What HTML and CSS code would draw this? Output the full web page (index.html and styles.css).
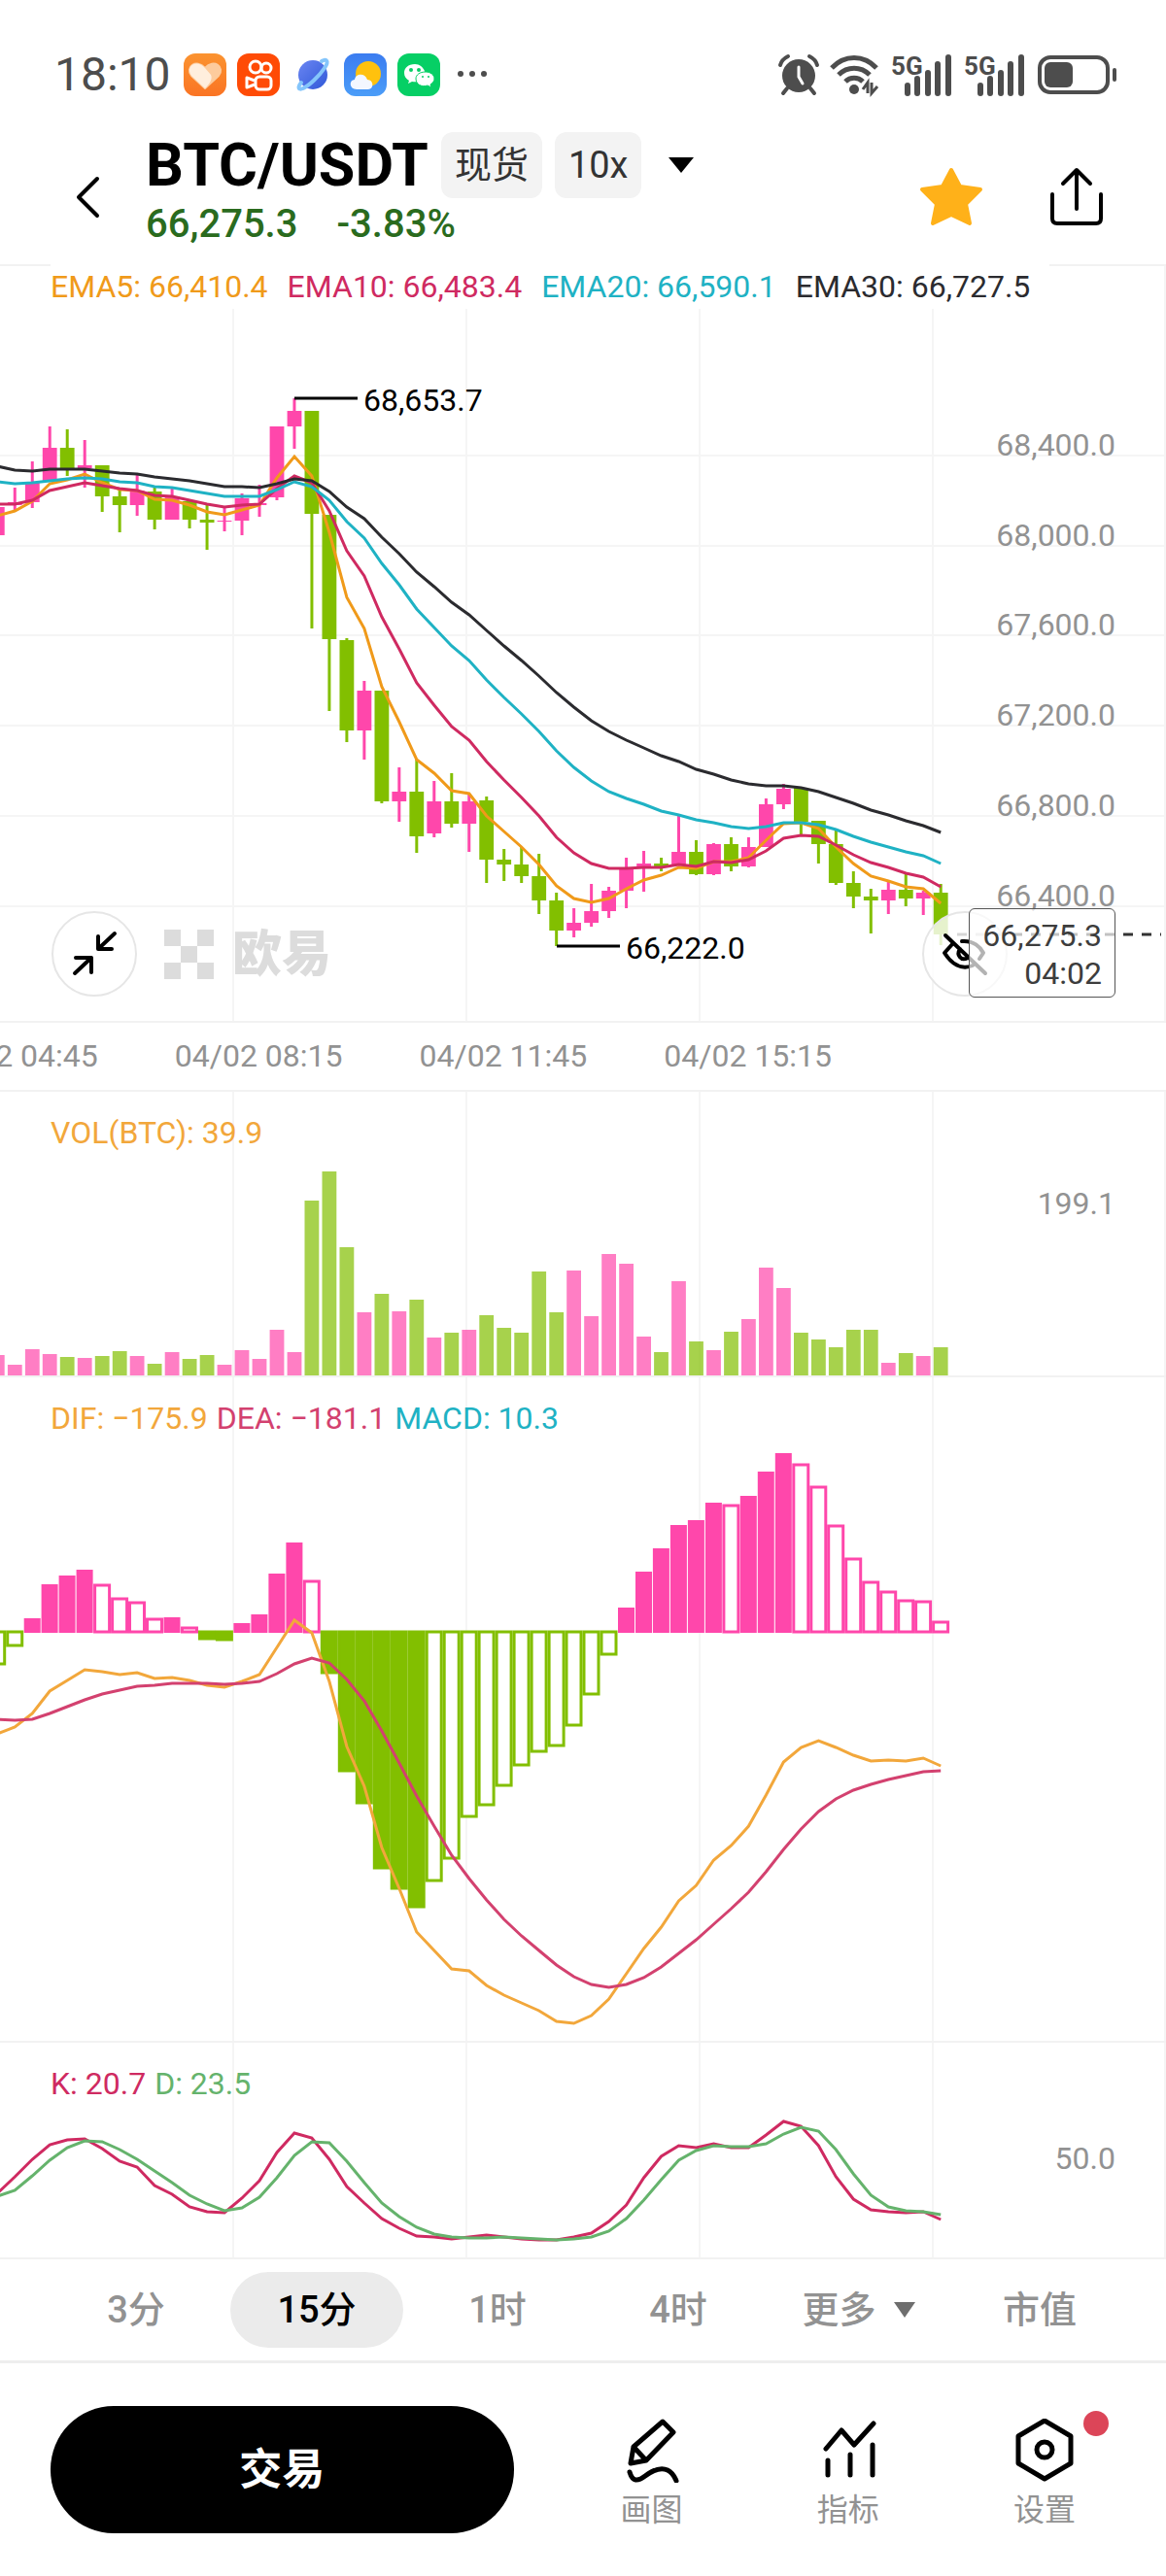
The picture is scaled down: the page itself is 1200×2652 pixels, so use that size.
FILE: index.html
```html
<!DOCTYPE html>
<html lang="zh-CN">

<head>
  <meta charset="UTF-8">
  <meta name="viewport" content="width=device-width, initial-scale=1.0">
  <title>BTC/USDT</title>
  <link rel="stylesheet" href="styles.css">
</head>

<body>
  <div class="status">
    <span class="clock">18:10</span>
    <div class="apps">
      <svg class="app" viewBox="0 0 44 44">
        <defs>
          <linearGradient id="heart" x1="0" y1="0" x2="0" y2="1">
            <stop offset="0" stop-color="#fb9330" />
            <stop offset="1" stop-color="#fa7424" />
          </linearGradient>
        </defs>
        <rect width="44" height="44" rx="12" fill="url(#heart)" />
        <path d="M22 36L8 23C1 14 13 5 22 15C31 5 43 14 36 23Z" fill="#fdcb9c" stroke="#fdcb9c" stroke-width="2" stroke-linejoin="round" />
        <path d="M22 36L8 23C1 14 13 5 22 15L28 22C30 26 27 31 22 36Z" fill="#ffeedd" />
      </svg>
      <svg class="app" viewBox="0 0 44 44">
        <rect width="44" height="44" rx="12" fill="#ff4b06" />
        <g fill="none" stroke="#fff" stroke-width="3">
          <circle cx="19" cy="14" r="6" />
          <circle cx="30" cy="15" r="5" />
          <rect x="19" y="24" width="16" height="13" rx="4" />
          <path d="M18 28L10 25V35L18 32" stroke-linejoin="round" />
        </g>
      </svg>
      <svg class="app" viewBox="0 0 44 44">
        <defs>
          <linearGradient id="planet" x1="0" y1="0" x2="1" y2="1">
            <stop offset="0" stop-color="#6b86f2" />
            <stop offset="1" stop-color="#2f58d8" />
          </linearGradient>
        </defs>
        <circle cx="23" cy="22" r="15" fill="url(#planet)" />
        <path d="M32 8C37 5 40 8 35 15C29 24 19 33 13 36C8 38 7 35 11 30" fill="none" stroke="#84c5fb" stroke-width="4" stroke-linecap="round" />
      </svg>
      <svg class="app" viewBox="0 0 44 44">
        <defs>
          <linearGradient id="sky" x1="0" y1="0" x2="0" y2="1">
            <stop offset="0" stop-color="#3b7cf0" />
            <stop offset="1" stop-color="#4b9df8" />
          </linearGradient>
        </defs>
        <rect width="44" height="44" rx="12" fill="url(#sky)" />
        <circle cx="25" cy="21" r="13" fill="#ffc10d" />
        <path d="M13 37C5 37 5 27 11 27C12 20 22 20 24 27C31 27 31 37 25 37Z" fill="#f3f7ff" />
      </svg>
      <svg class="app" viewBox="0 0 44 44">
        <rect width="44" height="44" rx="12" fill="#06cf65" />
        <path d="M18 11C11 11 7 15 7 20C7 24 9 26 12 28L11 31L15 29C26 31 30 24 28 18C26 14 23 11 18 11Z" fill="#fff" />
        <path d="M29 19C23 19 19 22 19 26C19 32 25 35 31 33L35 35L34 32C37 30 38 28 38 26C38 22 34 19 29 19Z" fill="#fff" stroke="#06cf65" stroke-width="1" />
        <g fill="#06cf65">
          <circle cx="14" cy="17" r="2" />
          <circle cx="22" cy="17" r="2" />
          <circle cx="26" cy="24" r="1" />
          <circle cx="32" cy="24" r="1" />
        </g>
      </svg>
    </div>
    <svg class="more" viewBox="0 0 34 44" fill="#4d4d4d">
      <circle cx="5" cy="21" r="3" />
      <circle cx="17" cy="21" r="3" />
      <circle cx="29" cy="21" r="3" />
    </svg>
    <div class="signals">
      <svg class="alarm" viewBox="0 0 42 44">
        <circle cx="21" cy="23" r="17" fill="#4d4d4d" />
        <g fill="none" stroke="#4d4d4d" stroke-width="4" stroke-linecap="round">
          <path d="M2 12C3 8 6 5 10 3M40 12C39 8 36 5 32 3M9 36L5 41M33 36L37 41" />
        </g>
        <path d="M21 14V24L25 31" fill="none" stroke="#fff" stroke-width="3" stroke-linecap="round" />
      </svg>
      <svg class="wifi" viewBox="0 0 52 44">
        <g fill="none" stroke="#4d4d4d" stroke-width="5">
          <path d="M2 15C15 1 35 1 48 15M9 22C18 13 32 13 41 22M16 29C21 24 29 24 34 29" />
        </g>
        <circle cx="25" cy="37" r="5" fill="#4d4d4d" />
        <path d="M34 37L39 30V41M43 30V41L49 34" fill="none" stroke="#4d4d4d" stroke-width="3" />
      </svg>
      <svg class="cell" viewBox="0 0 64 44">
        <text x="0" y="22">5G</text>
        <path d="M17 41V33M27 41V26M38 41V20M48 41V11M59 41V4" />
      </svg>
      <svg class="cell" viewBox="0 0 64 44">
        <text x="0" y="22">5G</text>
        <path d="M17 41V33M27 41V26M38 41V20M48 41V11M59 41V4" />
      </svg>
      <svg class="battery" viewBox="0 0 84 44">
        <rect x="3" y="4" width="70" height="36" rx="11" fill="none" stroke="#4d4d4d" stroke-width="4" />
        <rect x="8" y="9" width="29" height="26" rx="6" fill="#4d4d4d" />
        <path d="M80 17V27" stroke="#4d4d4d" stroke-width="4" stroke-linecap="round" />
      </svg>
    </div>
  </div>

  <header class="header">
    <button class="icon-btn back" aria-label="返回">
      <svg viewBox="0 0 30 60"><path d="M26 11L7 30L26 49" /></svg>
    </button>
    <div class="pair">
      <div class="pair-name">
        <h1>BTC/USDT</h1>
        <span class="tag">现货</span>
        <span class="tag">10x</span>
        <button class="icon-btn caret" aria-label="切换">
          <svg viewBox="0 0 28 20"><path d="M1 2H27L14 18Z" /></svg>
        </button>
      </div>
      <div class="pair-price"><span>66,275.3</span><span>-3.83%</span></div>
    </div>
    <div class="actions">
      <button class="icon-btn star" aria-label="收藏">
        <svg viewBox="0 0 66 62"><path d="M33 3L42 20L63 23L48 38L52 58L33 49L14 58L18 38L3 23L24 20Z" /></svg>
      </button>
      <button class="icon-btn share" aria-label="分享">
        <svg viewBox="0 0 56 62"><path d="M3 28V53Q3 58 8 58H48Q53 58 53 53V28M28 43V4M14 17L28 3L42 17" /></svg>
      </button>
    </div>
  </header>

  <main>
    <section class="panel">
      <svg id="price" class="chart" viewBox="0 274 1200 777"></svg>
      <p class="legend legend-ema">
        <span class="orange">EMA5: 66,410.4</span>
        <span class="red">EMA10: 66,483.4</span>
        <span class="cyan">EMA20: 66,590.1</span>
        <span class="dark">EMA30: 66,727.5</span>
      </p>
      <div class="watermark">
        <svg viewBox="0 0 51 51"><path d="M0 0H17V17H34V0H51V17H34V34H51V51H34V34H17V51H0V34H17V17H0Z" /></svg>
        <span>欧易</span>
      </div>
      <button class="round shrink" aria-label="收起">
        <svg viewBox="0 0 88 88"><path d="M65 23L48 39M48 26V39H62M24 64L41 48M25 48H41V63" /></svg>
      </button>
      <button class="round hide" aria-label="隐藏">
        <svg viewBox="0 0 88 88"><path d="M24 25L65 64M41 31C53 30 60 37 63 43L59 49M32 33L23 43C30 54 40 61 52 56M39 39C35 45 40 52 47 48" /></svg>
      </button>
      <div class="last-price">66,275.3<br>04:02</div>
    </section>

    <div class="times">
      <span>04/02 04:45</span>
      <span>04/02 08:15</span>
      <span>04/02 11:45</span>
      <span>04/02 15:15</span>
    </div>

    <section class="panel">
      <svg id="volume" class="chart" viewBox="0 1123 1200 292"></svg>
      <p class="legend"><span class="amber">VOL(BTC): 39.9</span></p>
    </section>

    <section class="panel">
      <svg id="macd" class="chart" viewBox="0 1417 1200 683"></svg>
      <p class="legend">
        <span class="amber">DIF: −175.9</span>
        <span class="rose">DEA: −181.1</span>
        <span class="cyan">MACD: 10.3</span>
      </p>
    </section>

    <section class="panel">
      <svg id="kdj" class="chart" viewBox="0 2102 1200 221"></svg>
      <p class="legend">
        <span class="red">K: 20.7</span>
        <span class="green">D: 23.5</span>
      </p>
    </section>
  </main>

  <nav class="tabs">
    <button>3分</button>
    <button class="active">15分</button>
    <button>1时</button>
    <button>4时</button>
    <button>更多<svg viewBox="0 0 24 18"><path d="M1 1H23L12 17Z" /></svg></button>
    <button>市值</button>
  </nav>

  <footer class="bottom">
    <button class="trade">交易</button>
    <div class="tools">
      <button>
        <svg viewBox="0 0 64 66"><path d="M43 3L54 14L26 43L10 46L13 29ZM13 29L26 43M9 55C12 65 17 65 25 59S42 50 48 53S55 60 57 64" /></svg>
        画图
      </button>
      <button>
        <svg viewBox="0 0 64 66"><path d="M9 31L25 12L38 27L58 5M11 43V58M34 37V58M57 27V58" /></svg>
        指标
      </button>
      <button>
        <svg viewBox="0 0 64 66"><path d="M32 2L59 18V46L32 62L5 46V18Z" /><circle cx="32" cy="32" r="8" /></svg>
        设置
        <i class="dot"></i>
      </button>
    </div>
  </footer>

  <script src="script.js"></script>
</body>

</html>
```
FILE: styles.css
```css
* {
  box-sizing: border-box;
}

body {
  margin: 0;
  background-color: #fff;
  color: #000;
  font-family: Roboto, "Noto Sans CJK SC", sans-serif;
  font-size: 32px;
}

button {
  border: none;
  background: none;
  padding: 0;
  color: inherit;
  font: inherit;
  cursor: pointer;
}

h1,
p {
  margin: 0;
}

svg {
  display: block;
}

/* status bar */
.status {
  display: flex;
  align-items: center;
  padding: 52px 49px 0 56px;
  color: #4d4d4d;
}

.clock {
  font-size: 48px;
  line-height: 50px;
}

.apps {
  display: flex;
  gap: 11px;
  margin-left: 13px;
}

.app {
  width: 44px;
  height: 44px;
}

.more {
  width: 34px;
  height: 44px;
  margin-left: 16px;
}

.signals {
  display: flex;
  gap: 11px;
  margin-left: auto;
}

.signals svg {
  height: 44px;
  overflow: visible;
}

.alarm {
  width: 42px;
}

.wifi {
  width: 52px;
}

.cell {
  width: 64px;
}

.cell text {
  font-size: 26px;
  font-weight: 700;
  fill: #4d4d4d;
}

.cell path {
  stroke: #4d4d4d;
  stroke-width: 6;
  stroke-linecap: round;
}

.battery {
  width: 84px;
}

/* header */
.header {
  display: flex;
  align-items: flex-start;
  padding: 34px 64px 17px 74px;
}

.icon-btn svg {
  fill: none;
  stroke: #000;
  stroke-width: 4;
  stroke-linecap: round;
  stroke-linejoin: round;
}

.back {
  margin-top: 37px;
}

.back svg {
  width: 30px;
  height: 60px;
}

.pair {
  margin-left: 46px;
}

.pair-name {
  display: flex;
  align-items: center;
  gap: 13px;
}

.pair-name h1 {
  font-size: 61px;
  line-height: 68px;
  font-weight: 700;
}

.tag {
  padding: 0 14px;
  border-radius: 12px;
  background-color: #f3f3f3;
  color: #333;
  font-size: 38px;
  line-height: 68px;
}

.caret {
  margin-left: 14px;
}

.caret svg {
  width: 28px;
  height: 20px;
  fill: #000;
  stroke: none;
}

.pair-price {
  display: flex;
  gap: 40px;
  margin-top: 3px;
  color: #2a6b1e;
  font-size: 40px;
  line-height: 48px;
  font-weight: 500;
}

.actions {
  display: flex;
  gap: 68px;
  margin-top: 36px;
  margin-left: auto;
}

.star svg {
  width: 66px;
  height: 62px;
  fill: #ffb119;
  stroke: #ffb119;
}

.share svg {
  width: 56px;
  height: 62px;
}

/* charts */
.panel {
  position: relative;
  border-top: 2px solid #f2f2f2;
}

.chart {
  width: 100%;
  height: auto;
}

.grid {
  stroke: #f5f5f5;
  stroke-width: 2;
}

.scale {
  fill: #929292;
  text-anchor: end;
}

.up {
  fill: #ff47ab;
  stroke: #ff47ab;
}

.down {
  fill: #82bf00;
  stroke: #82bf00;
}

.candle rect,
.volume rect {
  stroke: none;
}

.candle line {
  stroke-width: 3;
}

.volume rect {
  opacity: 0.7;
}

.histogram rect {
  stroke-width: 2;
}

.histogram .down rect {
  stroke-width: 3;
}

.histogram .hollow {
  fill: #fff;
  stroke-width: 3;
}

.line {
  fill: none;
  stroke: currentColor;
  stroke-width: 3;
}

.mark {
  stroke: #000;
  stroke-width: 3;
}

.dash {
  stroke: #333;
  stroke-width: 3;
  stroke-dasharray: 10 9;
}

.orange {
  color: #f09a1a;
}

.amber {
  color: #f2a73b;
}

.red {
  color: #cf2a61;
}

.rose {
  color: #d3416f;
}

.cyan {
  color: #1fb2c4;
}

.dark {
  color: #2b2b2f;
}

.green {
  color: #65b36c;
}

.legend {
  position: absolute;
  top: 20px;
  left: 52px;
  display: flex;
  gap: 9px;
  line-height: 44px;
  white-space: nowrap;
}

.legend-ema {
  top: -2px;
  gap: 20px;
  padding-right: 20px;
  background-color: #fff;
  line-height: 46px;
}

.watermark {
  position: absolute;
  left: 169px;
  bottom: 43px;
  display: flex;
  align-items: center;
  gap: 19px;
  height: 51px;
  color: #dcdcdc;
  font-size: 51px;
  line-height: 51px;
  font-weight: 900;
}

.watermark svg {
  width: 51px;
  height: 51px;
  fill: #dcdcdc;
}

.round {
  position: absolute;
  bottom: 25px;
  width: 88px;
  height: 88px;
  border: 2px solid #e6e6e6;
  border-radius: 50%;
  background-color: rgba(255, 255, 255, 0.8);
}

.round svg {
  width: 88px;
  height: 88px;
  margin: -2px;
  fill: none;
  stroke: #000;
  stroke-width: 4;
  stroke-linecap: round;
  stroke-linejoin: round;
}

.shrink {
  left: 53px;
}

.hide {
  right: 163px;
}

.last-price {
  position: absolute;
  right: 52px;
  bottom: 24px;
  padding: 8px 13px 4px;
  border: 1px solid #555;
  border-radius: 6px;
  background-color: rgba(255, 255, 255, 0.7);
  color: #3d3d3d;
  line-height: 39px;
  text-align: right;
}

.times {
  display: flex;
  gap: 79px;
  margin-left: -72px;
  border-top: 2px solid #f2f2f2;
  color: #929292;
  line-height: 69px;
  white-space: nowrap;
}

/* period tabs */
.tabs {
  display: grid;
  grid-template-columns: repeat(6, 1fr);
  padding: 13px 37px 13px 47px;
  border-top: 2px solid #f2f2f2;
  border-bottom: 3px solid #eee;
  color: #929292;
  font-size: 38px;
  font-weight: 500;
}

.tabs button {
  display: flex;
  align-items: center;
  justify-content: center;
  gap: 17px;
  margin: 0 4px;
  border-radius: 39px;
  line-height: 78px;
}

.tabs .active {
  background-color: #ebebeb;
  color: #000;
}

.tabs svg {
  width: 24px;
  height: 18px;
  fill: #6e6e6e;
}

/* bottom bar */
.bottom {
  display: grid;
  grid-template-columns: 44fr 56fr;
  gap: 41px;
  padding: 44px 24px 46px 52px;
}

.trade {
  border-radius: 65px;
  background-color: #000;
  color: #fff;
  font-size: 44px;
  line-height: 130px;
  font-weight: 700;
}

.tools {
  display: grid;
  grid-template-columns: repeat(3, 1fr);
}

.tools button {
  position: relative;
  display: flex;
  flex-direction: column;
  align-items: center;
  gap: 4px;
  padding-top: 13px;
  color: #929292;
  line-height: 48px;
}

.tools svg {
  width: 64px;
  height: 66px;
  fill: none;
  stroke: #000;
  stroke-width: 5;
  stroke-linecap: round;
  stroke-linejoin: round;
}

.dot {
  position: absolute;
  top: 5px;
  left: 50%;
  width: 26px;
  height: 26px;
  margin-left: 40px;
  border-radius: 50%;
  background-color: #dc4558;
}
```
FILE: script.js
```js
// one letter per candle: u = up, d = down
var dirs = "uuuududdududduuuuudddududududdddduuuuudududuuudddddudud";

// high, body top, body bottom, low
var candles = [
  [522, 522, 551, 551], [502, 517, 520, 526], [475, 497, 517, 523], [439, 461, 495, 495], [442, 461, 482, 490],
  [453, 479, 482, 502], [479, 479, 511, 527], [504, 511, 520, 548], [488, 505, 520, 531], [502, 506, 535, 545],
  [503, 511, 535, 535], [516, 516, 535, 544], [520, 535, 538, 566], [522, 536, 537, 547], [508, 513, 536, 551],
  [499, 518, 520, 532], [439, 439, 512, 515], [410, 423, 439, 462], [423, 423, 529, 647], [530, 530, 658, 732],
  [657, 659, 752, 764], [701, 711, 752, 782], [711, 711, 825, 827], [790, 815, 825, 846], [782, 815, 861, 878],
  [804, 825, 858, 862], [796, 825, 848, 852], [818, 825, 848, 877], [820, 824, 885, 909], [874, 885, 890, 907],
  [872, 890, 902, 909], [879, 902, 927, 941], [919, 927, 958, 974], [935, 950, 958, 965], [910, 938, 950, 954],
  [913, 917, 938, 945], [883, 894, 917, 935], [876, 889, 894, 918], [883, 889, 892, 897], [839, 877, 891, 891],
  [865, 877, 900, 901], [868, 869, 900, 901], [862, 869, 892, 897], [862, 872, 892, 893], [822, 828, 872, 872],
  [807, 812, 828, 833], [811, 811, 846, 860], [845, 845, 869, 889], [855, 869, 909, 911], [897, 909, 923, 935],
  [915, 923, 927, 961], [908, 916, 927, 941], [899, 916, 925, 933], [917, 919, 925, 942], [910, 919, 962, 973]
];

var ema5 = [531, 526, 516, 498, 494, 488, 497, 504, 505, 514, 515, 520, 527, 530, 525, 520, 492, 470, 490, 548, 615, 647, 707, 743, 782, 796, 814, 817, 840, 856, 872, 890, 912, 925, 929, 925, 915, 906, 901, 893, 894, 887, 887, 883, 865, 848, 847, 853, 872, 889, 902, 907, 913, 915, 930];
var ema10 = [519, 519, 515, 505, 501, 497, 500, 503, 505, 510, 511, 515, 519, 522, 520, 519, 503, 490, 497, 526, 567, 593, 635, 668, 703, 726, 748, 762, 784, 803, 821, 840, 862, 878, 889, 894, 894, 893, 893, 890, 892, 887, 888, 885, 876, 863, 860, 861, 870, 880, 888, 893, 899, 903, 913];
var ema20 = [496, 498, 497, 495, 493, 492, 493, 496, 497, 501, 502, 505, 508, 511, 511, 511, 504, 496, 501, 515, 537, 554, 580, 602, 627, 646, 665, 680, 700, 718, 735, 753, 773, 790, 804, 815, 822, 828, 835, 839, 844, 847, 851, 853, 851, 847, 847, 849, 854, 861, 867, 872, 877, 881, 889];
var ema30 = [480, 484, 485, 483, 483, 483, 485, 487, 488, 491, 493, 495, 498, 501, 501, 502, 498, 493, 495, 506, 522, 534, 553, 570, 589, 604, 620, 633, 649, 665, 680, 696, 713, 728, 742, 753, 762, 770, 778, 784, 792, 797, 803, 807, 809, 809, 811, 815, 821, 827, 834, 839, 845, 850, 857];

var volumes = [1394, 1404, 1388, 1393, 1396, 1397, 1395, 1390, 1395, 1403, 1391, 1398, 1394, 1404, 1389, 1398, 1368, 1391, 1235, 1205, 1283, 1350, 1331, 1349, 1337, 1376, 1371, 1368, 1353, 1366, 1371, 1308, 1350, 1307, 1354, 1290, 1300, 1375, 1391, 1318, 1380, 1389, 1370, 1357, 1304, 1325, 1371, 1378, 1386, 1368, 1368, 1402, 1392, 1395, 1386];

var zero = 1679;
var macd = [1712, 1693, 1666, 1631, 1622, 1616, 1631, 1645, 1649, 1666, 1665, 1675, 1686, 1687, 1671, 1662, 1620, 1588, 1627, 1721, 1822, 1855, 1922, 1943, 1962, 1935, 1912, 1869, 1857, 1837, 1816, 1802, 1796, 1775, 1743, 1702, 1655, 1618, 1594, 1570, 1565, 1547, 1549, 1540, 1515, 1496, 1507, 1530, 1570, 1604, 1628, 1638, 1647, 1648, 1669];
var dif = [1784, 1777, 1763, 1740, 1729, 1718, 1720, 1723, 1721, 1727, 1726, 1729, 1734, 1736, 1730, 1723, 1695, 1667, 1680, 1730, 1797, 1838, 1901, 1943, 1988, 2007, 2026, 2028, 2043, 2053, 2061, 2069, 2080, 2082, 2074, 2057, 2031, 2005, 1983, 1956, 1940, 1914, 1899, 1879, 1847, 1813, 1798, 1791, 1798, 1806, 1812, 1811, 1812, 1809, 1817];
var dea = [1769, 1770, 1769, 1763, 1756, 1749, 1743, 1739, 1735, 1734, 1732, 1732, 1732, 1733, 1732, 1730, 1722, 1712, 1706, 1711, 1728, 1750, 1781, 1814, 1848, 1879, 1909, 1933, 1955, 1975, 1992, 2007, 2022, 2034, 2042, 2045, 2042, 2035, 2024, 2010, 1996, 1980, 1964, 1947, 1926, 1903, 1882, 1864, 1851, 1842, 1836, 1831, 1827, 1823, 1822];

var k = [2257, 2240, 2222, 2207, 2202, 2201, 2211, 2224, 2230, 2249, 2258, 2271, 2276, 2277, 2262, 2244, 2215, 2195, 2200, 2222, 2250, 2267, 2283, 2293, 2301, 2302, 2304, 2302, 2300, 2302, 2304, 2305, 2305, 2302, 2298, 2286, 2269, 2241, 2219, 2208, 2210, 2206, 2210, 2210, 2197, 2183, 2188, 2208, 2240, 2263, 2274, 2276, 2277, 2276, 2284];
var d = [2260, 2254, 2239, 2223, 2210, 2203, 2204, 2212, 2222, 2234, 2246, 2259, 2268, 2275, 2272, 2261, 2241, 2218, 2204, 2205, 2224, 2246, 2267, 2281, 2292, 2299, 2302, 2303, 2303, 2302, 2303, 2304, 2305, 2304, 2302, 2296, 2283, 2264, 2243, 2223, 2213, 2208, 2209, 2209, 2206, 2196, 2189, 2193, 2212, 2237, 2259, 2271, 2275, 2276, 2279];

function xAt(i) {
  return -2.7 + i * 17.98;
}

function dirAt(i) {
  return dirs[i] == "u" ? "up" : "down";
}

function rect(x, y, w, h, cls) {
  return '<rect x="' + x.toFixed(1) + '" y="' + y + '" width="' + w + '" height="' + h + '" class="' + cls + '"/>';
}

function seg(x1, y1, x2, y2, cls) {
  return '<line x1="' + x1 + '" y1="' + y1 + '" x2="' + x2 + '" y2="' + y2 + '" class="' + cls + '"/>';
}

function label(x, y, text, cls) {
  return '<text x="' + x + '" y="' + y + '" class="' + cls + '">' + text + '</text>';
}

function line(values, color) {
  var points = values.map(function (y, i) {
    return xAt(i).toFixed(1) + "," + y;
  });
  return '<polyline class="line ' + color + '" points="' + points.join(" ") + '"/>';
}

function columns(top, bottom) {
  var out = "";
  for (var x = 240; x <= 1200; x += 240) {
    out += seg(Math.min(x, 1199), top, Math.min(x, 1199), bottom, "grid");
  }
  return out;
}

function drawPrice() {
  var out = columns(274, 1051);
  var prices = ["68,400.0", "68,000.0", "67,600.0", "67,200.0", "66,800.0", "66,400.0"];
  var rows = [469, 562, 654, 747, 840, 933];
  for (var i = 0; i < rows.length; i++) {
    out += seg(0, rows[i], 1200, rows[i], "grid");
    out += label(1148, rows[i], prices[i], "scale");
  }
  out += '<g class="candle">';
  candles.forEach(function (c, i) {
    var x = xAt(i);
    out += seg(x, c[0], x, c[3], dirAt(i));
    out += rect(x - 7.4, c[1], 14.8, c[2] - c[1], dirAt(i));
  });
  out += '</g>';
  out += line(ema5, "orange") + line(ema10, "red") + line(ema20, "cyan") + line(ema30, "dark");
  out += seg(303, 410, 368, 410, "mark") + label(374, 423, "68,653.7", "");
  out += seg(573, 974, 638, 974, "mark") + label(644, 987, "66,222.0", "");
  out += seg(985, 962, 1195, 962, "dash");
  document.getElementById("price").innerHTML = out;
}

function drawVolume() {
  var out = columns(1123, 1415) + label(1148, 1249, "199.1", "scale") + '<g class="volume">';
  volumes.forEach(function (y, i) {
    out += rect(xAt(i) - 7.4, y, 14.8, 1415 - y, dirAt(i));
  });
  document.getElementById("volume").innerHTML = out + '</g>';
}

function drawMacd() {
  var out = columns(1417, 2100) + '<g class="histogram">';
  // value before the first visible bar
  var last = 1730;
  macd.forEach(function (y, i) {
    var above = y < zero;
    // bars that shrink towards zero are drawn hollow
    var shrink = Math.abs(y - zero) < Math.abs(last - zero) && (last < zero) == above;
    out += '<g class="' + (above ? "up" : "down") + '">';
    out += rect(xAt(i) - 7.6, Math.min(y, zero), 15, Math.abs(y - zero), shrink ? "hollow" : "");
    out += '</g>';
    last = y;
  });
  out += '</g>' + line(dif, "amber") + line(dea, "rose");
  document.getElementById("macd").innerHTML = out;
}

function drawKdj() {
  document.getElementById("kdj").innerHTML = columns(2102, 2323) +
    label(1148, 2232, "50.0", "scale") + line(k, "red") + line(d, "green");
}

drawPrice();
drawVolume();
drawMacd();
drawKdj();
```
